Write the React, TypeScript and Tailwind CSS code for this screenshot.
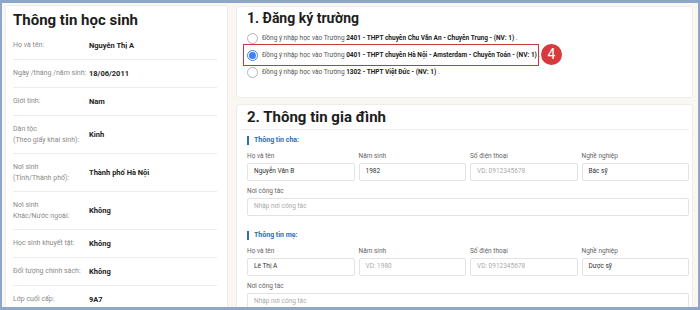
import React from "react";

const student: { label: string[]; value: string }[] = [
  { label: ["Họ và tên:"], value: "Nguyễn Thị A" },
  { label: ["Ngày /tháng /năm sinh:"], value: "18/06/2011" },
  { label: ["Giới tính:"], value: "Nam" },
  { label: ["Dân tộc", "(Theo giấy khai sinh):"], value: "Kinh" },
  { label: ["Nơi sinh", "(Tỉnh/Thành phố):"], value: "Thành phố Hà Nội" },
  { label: ["Nơi sinh", "Khác/Nước ngoài:"], value: "Không" },
  { label: ["Học sinh khuyết tật:"], value: "Không" },
  { label: ["Đối tượng chính sách:"], value: "Không" },
  { label: ["Lớp cuối cấp:"], value: "9A7" },
];

const schools = [
  { code: "2401", name: "THPT chuyên Chu Văn An - Chuyên Trung", checked: false },
  { code: "0401", name: "THPT chuyên Hà Nội - Amsterdam - Chuyên Toán", checked: true },
  { code: "1302", name: "THPT Việt Đức", checked: false },
];

function Field({ label, value, placeholder }: { label: string; value?: string; placeholder?: string }) {
  return (
    <div className="flex flex-col">
      <div className="h-[10px] flex items-center text-[6.5px] text-[#666]">{label}</div>
      <div className="h-[18px] mt-[1px] border border-[#e3e3e3] rounded-[2px] bg-white flex items-center px-[6px] text-[6.5px]">
        {value ? <span className="text-[#333]">{value}</span> : <span className="text-[#aaa]">{placeholder}</span>}
      </div>
    </div>
  );
}

function Parent({ title, name, year, job }: { title: string; name: string; year?: string; job: string }) {
  return (
    <div className="flex flex-col">
      <div className="flex items-center gap-[5px] h-[12px]">
        <div className="w-[2px] h-[9px] bg-[#2e6db4]" />
        <span className="text-[7px] font-bold text-[#2e6db4]">{title}</span>
      </div>
      <div className="grid grid-cols-4 gap-x-[4px] mt-[6px]">
        <Field label="Họ và tên" value={name} />
        <Field label="Năm sinh" value={year} placeholder="VD: 1980" />
        <Field label="Số điện thoại" placeholder="VD: 0912345678" />
        <Field label="Nghề nghiệp" value={job} />
      </div>
      <div className="mt-[6px]">
        <Field label="Nơi công tác" placeholder="Nhập nơi công tác" />
      </div>
    </div>
  );
}

export default function App() {
  return (
    <div className="w-[700px] h-[310px] overflow-hidden border-[#8ea6c9] border-t-[3px] border-b-[3px] border-x-2 bg-[#faf7f2] flex gap-[8px] pt-[2px] pl-[3px] pr-[5px] font-['Roboto',sans-serif]">
      {/* left card */}
      <div className="w-[223px] shrink-0 bg-white border border-[#ececec] rounded-[3px] px-[7px] pt-[6px] h-[320px]">
        <div className="text-[15px] font-bold text-[#1d1d1d] leading-[16px] h-[20px]">Thông tin học sinh</div>
        {student.map((r, i) => (
          <div
            key={i}
            className={`flex items-center border-b border-[#ececec] mr-[3px] ${r.label.length > 1 ? "h-[38px]" : "h-[28px]"}`}
          >
            <div className="w-[76px] shrink-0 whitespace-nowrap text-[7px] leading-[11px] text-[#8a8a8a]">
              {r.label.map((l) => (
                <div key={l}>{l}</div>
              ))}
            </div>
            <div className="text-[7.5px] font-bold text-[#222]">{r.value}</div>
          </div>
        ))}
      </div>

      {/* right column */}
      <div className="flex-1 flex flex-col gap-[6px] pt-[1px]">
        <div className="relative h-[92px] shrink-0 bg-white border border-[#ececec] rounded-[3px] pl-[10px] pt-[3px]">
          <div className="text-[14px] font-bold text-[#1d1d1d] leading-[16px]">1. Đăng ký trường</div>
          <div className="flex flex-col mt-[4px]">
            {schools.map((s) => (
              <div key={s.code} className="h-[17px] flex items-center gap-[4px] text-[6.5px] text-[#555]">
                <span
                  className={`w-[11px] h-[11px] shrink-0 rounded-full border flex items-center justify-center bg-white ${
                    s.checked ? "border-[#3b82f6]" : "border-[#b5b5b5]"
                  }`}
                >
                  {s.checked && <span className="w-[7px] h-[7px] rounded-full bg-[#3b82f6]" />}
                </span>
                <span className="whitespace-nowrap">
                  Đồng ý nhập học vào Trường <b className="text-[#222]">{s.code} - {s.name} - (NV: 1)</b> .
                </span>
              </div>
            ))}
          </div>
          <div className="absolute left-[6px] top-[37px] w-[296px] h-[22px] border-[1.5px] border-[#c8373b]" />
          <div className="absolute left-[304px] top-[37px] w-[21px] h-[21px] rounded-full bg-[#d83a3b] text-white text-[14px] flex items-center justify-center">
            4
          </div>
        </div>

        <div className="flex-1 bg-white border border-[#ececec] rounded-[3px] pl-[10px] pr-[3px] pt-[4px]">
          <div className="text-[15px] font-bold text-[#1d1d1d] leading-[16px]">2. Thông tin gia đình</div>
          <div className="h-px bg-[#ececec] mt-[4px] -ml-[6px]" />
          <div className="mt-[4px]">
            <Parent title="Thông tin cha:" name="Nguyễn Văn B" year="1982" job="Bác sỹ" />
          </div>
          <div className="mt-[13px]">
            <Parent title="Thông tin mẹ:" name="Lê Thị A" job="Dược sỹ" />
          </div>
        </div>
      </div>
    </div>
  );
}
